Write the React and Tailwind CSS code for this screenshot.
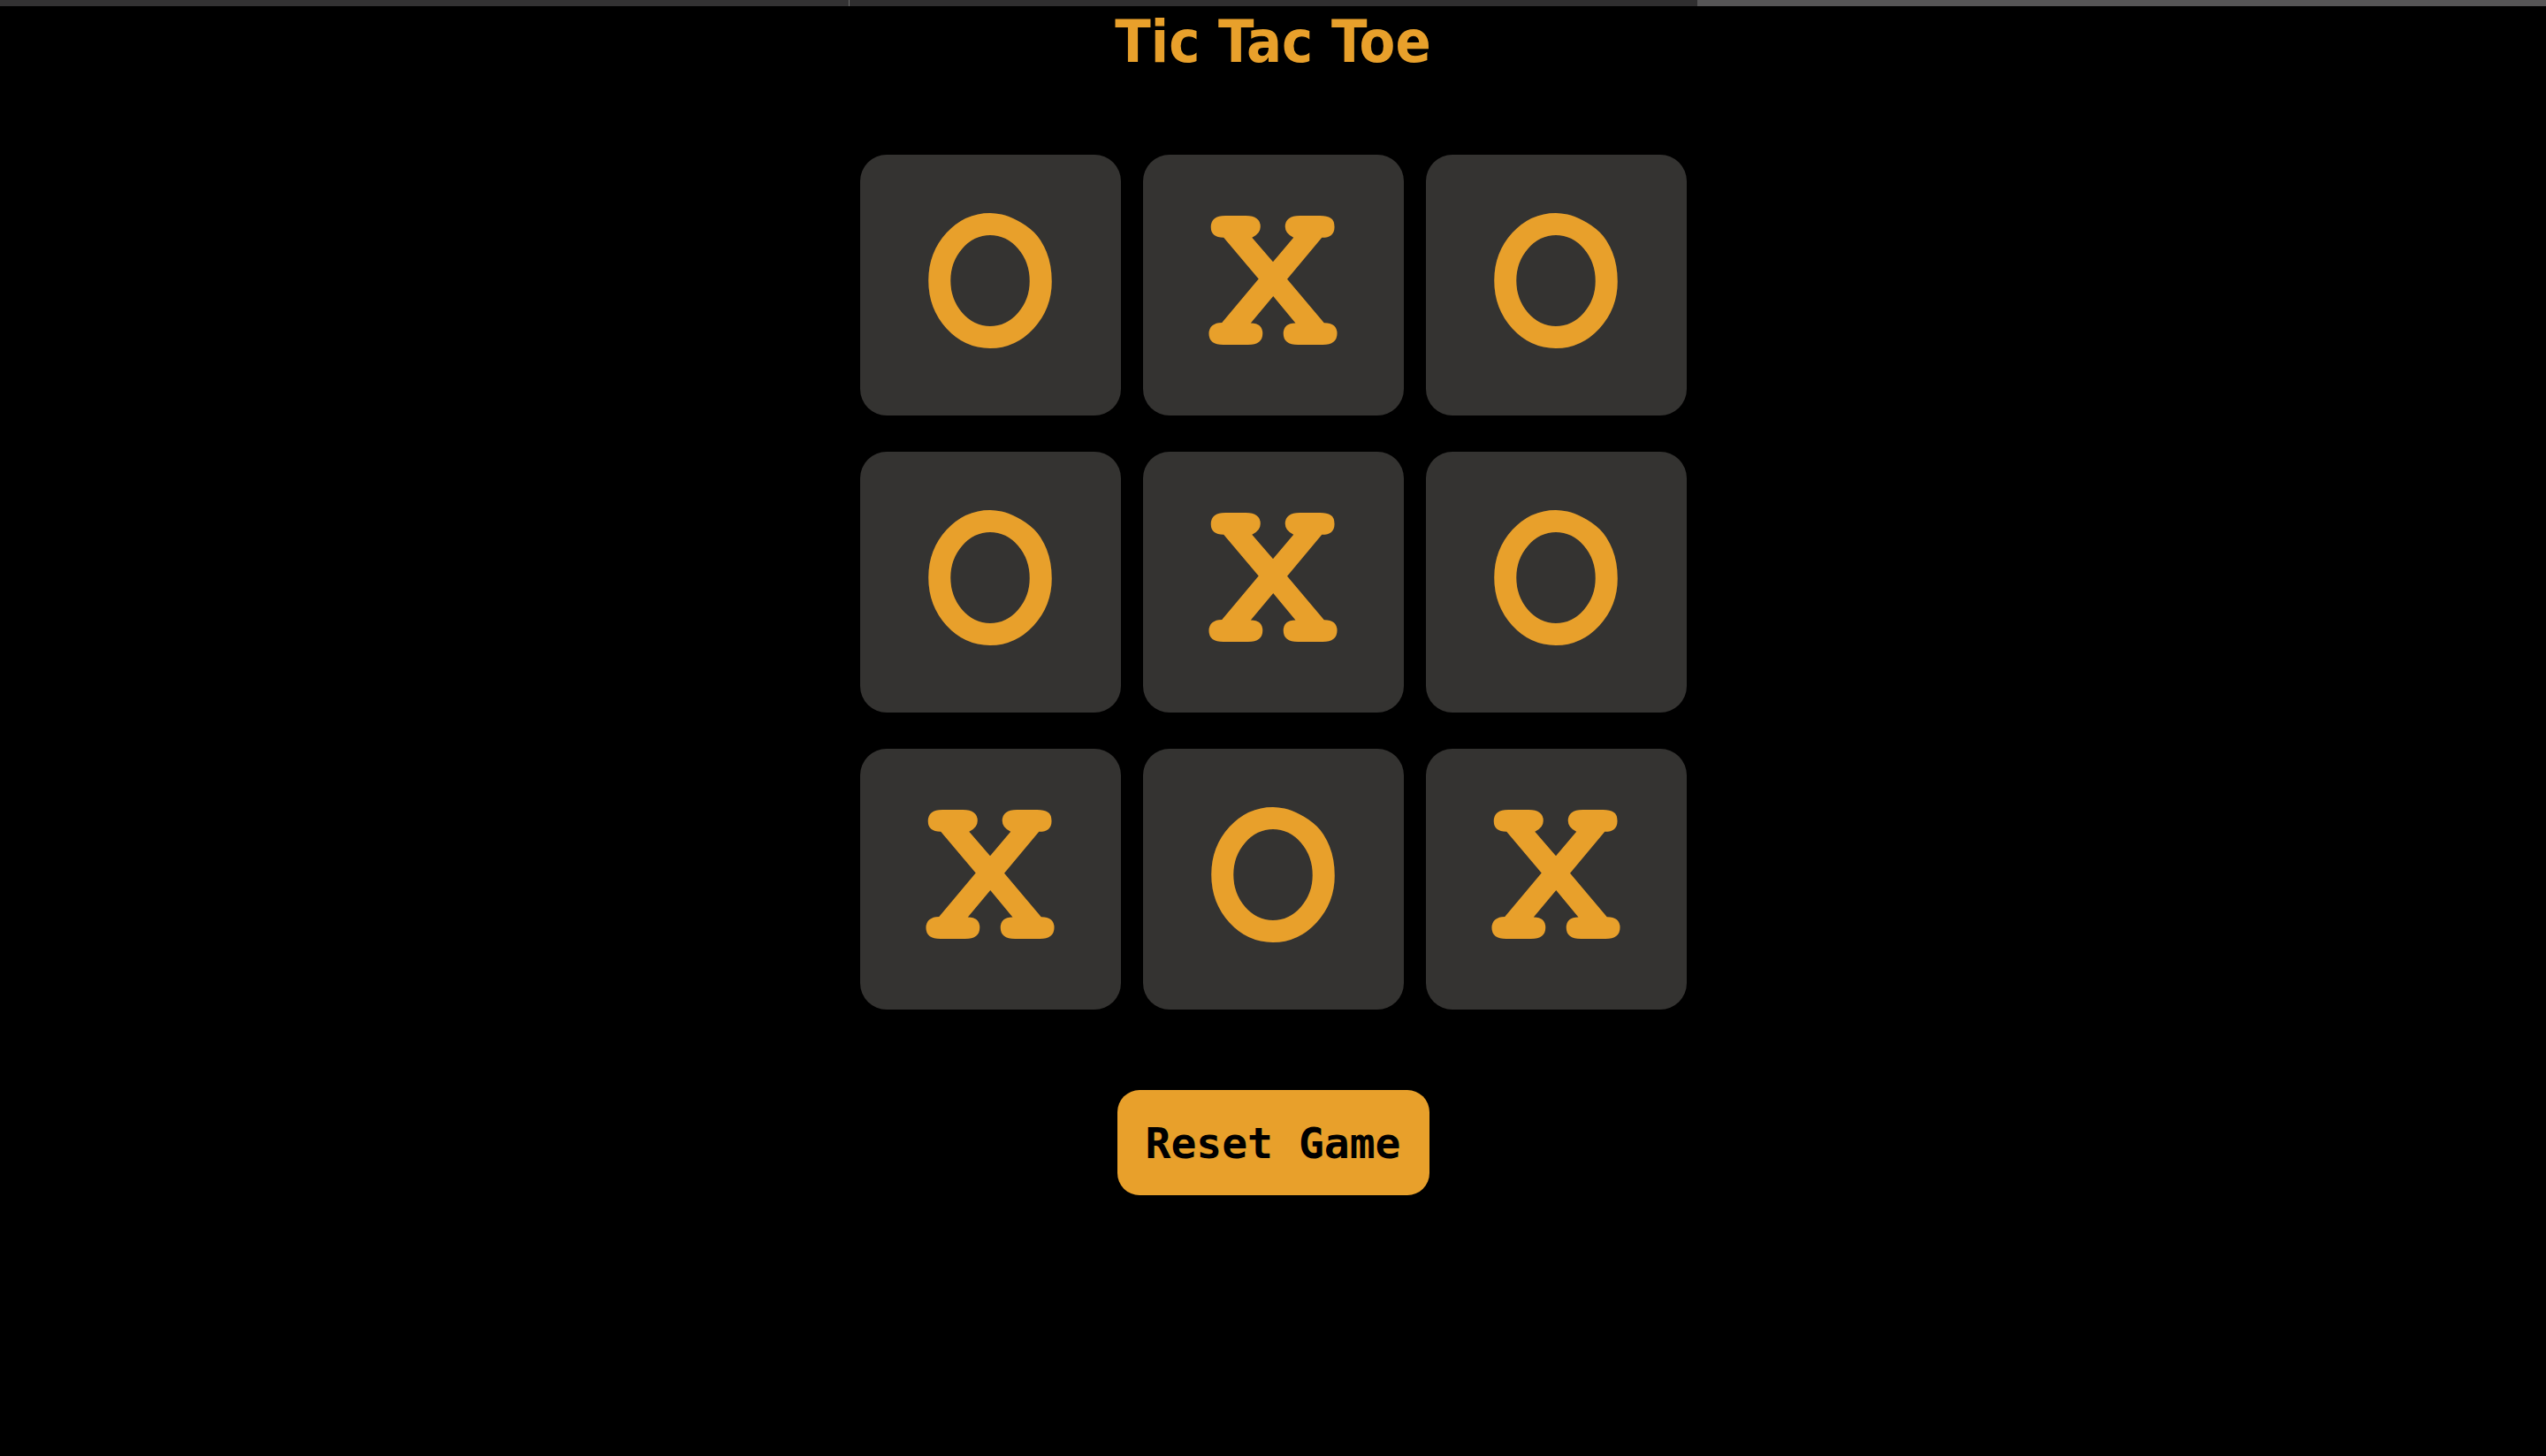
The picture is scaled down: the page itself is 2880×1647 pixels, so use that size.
import React, { useState } from "react";

const START = ["O", "X", "O", "O", "X", "O", "X", "O", "X"];

const App = () => {
  const [board, setBoard] = useState(START);
  const [turn, setTurn] = useState("X");

  const play = (i) => {
    if (board[i]) return;
    const next = [...board];
    next[i] = turn;
    setBoard(next);
    setTurn(turn === "X" ? "O" : "X");
  };

  const reset = () => {
    setBoard(Array(9).fill(""));
    setTurn("X");
  };

  return (
    <div className="min-h-screen bg-black flex flex-col">
      {/* top strip */}
      <div className="flex h-[7px] w-full">
        <div className="flex-1 bg-[#333233]" />
        <div className="flex-1 bg-[#2f2e2f] border-l border-[#6a6a6a]" />
        <div className="flex-1 bg-[#565556]" />
      </div>

      <div className="flex flex-col items-center">
        <h1 className="mt-[8px] text-[66px] leading-none font-bold text-[#e8a02b] font-['DejaVu_Sans_Condensed','DejaVu_Sans',sans-serif]">
          Tic Tac Toe
        </h1>

        <div className="mt-[94px] grid grid-cols-[repeat(3,295px)] gap-x-[25px] gap-y-[41px]">
          {board.map((cell, i) => (
            <button
              key={i}
              onClick={() => play(i)}
              className="h-[295px] w-[295px] rounded-[30px] bg-[#343331] flex items-center justify-center"
            >
              <span className="mb-[16px] text-[250px] leading-none font-bold text-[#e8a02b] font-['FreeMono','Liberation_Mono',monospace]">
                {cell}
              </span>
            </button>
          ))}
        </div>

        <button
          onClick={reset}
          className="mt-[91px] h-[119px] w-[353px] rounded-[25px] bg-[#e8a02b] flex items-center justify-center text-[48px] leading-none font-bold text-black font-['DejaVu_Sans_Mono',monospace]"
        >
          Reset Game
        </button>
      </div>
    </div>
  );
};

export default App;
